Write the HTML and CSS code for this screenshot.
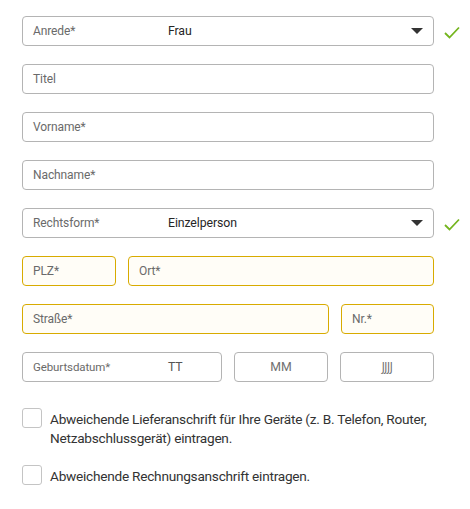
FILE: index.html
```html
<!DOCTYPE html>
<html lang="de">
<head>
<meta charset="utf-8">
<link rel="stylesheet" href="styles.css">
</head>
<body>
<form class="form">
  <div class="row">
    <div class="field select">
      <span class="label wide">Anrede*</span>
      <span class="value">Frau</span>
      <span class="caret"></span>
    </div>
    <svg class="check" width="16" height="13" viewBox="0 0 16 13"><path d="M1 7 L5.5 11.5 L15 1.5" fill="none" stroke="#74b51e" stroke-width="1.8"/></svg>
  </div>
  <div class="row"><div class="field"><span class="label">Titel</span></div></div>
  <div class="row"><div class="field"><span class="label">Vorname*</span></div></div>
  <div class="row"><div class="field"><span class="label">Nachname*</span></div></div>
  <div class="row">
    <div class="field select">
      <span class="label wide">Rechtsform*</span>
      <span class="value">Einzelperson</span>
      <span class="caret"></span>
    </div>
    <svg class="check" width="16" height="13" viewBox="0 0 16 13"><path d="M1 7 L5.5 11.5 L15 1.5" fill="none" stroke="#74b51e" stroke-width="1.8"/></svg>
  </div>
  <div class="row">
    <div class="field warn plz"><span class="label">PLZ*</span></div>
    <div class="field warn grow"><span class="label">Ort*</span></div>
  </div>
  <div class="row">
    <div class="field warn grow"><span class="label">Straße*</span></div>
    <div class="field warn nr"><span class="label">Nr.*</span></div>
  </div>
  <div class="row">
    <div class="field date-day">
      <span class="label wide small">Geburtsdatum*</span>
      <span class="value date">TT</span>
    </div>
    <div class="field date-part"><span class="value date">MM</span></div>
    <div class="field date-part"><span class="value date narrow">JJJJ</span></div>
  </div>
  <label class="cb first">
    <span class="box"></span>
    <span class="cb-text">Abweichende Lieferanschrift für Ihre Geräte (z. B. Telefon, Router, Netzabschlussgerät) eintragen.</span>
  </label>
  <label class="cb">
    <span class="box"></span>
    <span class="cb-text">Abweichende Rechnungsanschrift eintragen.</span>
  </label>
</form>
</body>
</html>
```

FILE: styles.css
```css
* { box-sizing: border-box; }
html, body { margin: 0; background: #fff; }
body {
  font-family: Roboto, "Liberation Sans", sans-serif;
  color: #262626;
}
.form {
  width: 470px;
  padding: 15.5px 0 0 22px;
}
.row {
  display: flex;
  align-items: center;
  gap: 12px;
  width: 412px;
  margin-bottom: 17.5px;
  position: relative;
}
.field {
  flex: 1 1 auto;
  min-width: 0;
  height: 30.5px;
  border: 1px solid #b4b4b4;
  border-radius: 4px;
  display: flex;
  align-items: center;
  padding: 0 10px;
  position: relative;
  background: #fff;
}
.field.warn {
  border-color: #d8ab00;
  background: #fffdf7;
}
.plz { flex: 0 0 94px; }
.nr { flex: 0 0 93px; }
.grow { flex: 1 1 auto; }
.date-day { flex: 0 0 200px; }
.date-part { flex: 1 1 0; justify-content: center; }
.label {
  font-size: 12px;
  color: #6a6a6a;
  letter-spacing: -0.1px;
}
.label.wide {
  width: 135px;
  flex: 0 0 auto;
}
.label.small { font-size: 11.5px; }
.value {
  font-size: 12.3px;
  color: #262626;
  letter-spacing: -0.1px;
}
.value.date { color: #555; }
.date-part .value.date { color: #707070; }
.narrow {
  font-family: "Liberation Sans Narrow", "DejaVu Sans Condensed", Roboto, sans-serif;
  letter-spacing: -0.4px;
  font-size: 11.5px;
}
.caret {
  position: absolute;
  right: 10px;
  top: 11px;
  width: 0;
  height: 0;
  border-left: 6px solid transparent;
  border-right: 6px solid transparent;
  border-top: 6px solid #333;
}
.check {
  position: absolute;
  left: 422px;
  top: 10px;
}
.cb {
  display: flex;
  align-items: flex-start;
  gap: 8px;
  width: 425px;
  margin-bottom: 17px;
}
.cb.first { margin-top: 25.5px; }
.box {
  flex: 0 0 20px;
  height: 20px;
  border: 1px solid #c4c4c4;
  border-radius: 3px;
}
.cb-text {
  font-size: 13.65px;
  line-height: 19px;
  letter-spacing: -0.25px;
  color: #333;
  padding-top: 2px;
}
```
